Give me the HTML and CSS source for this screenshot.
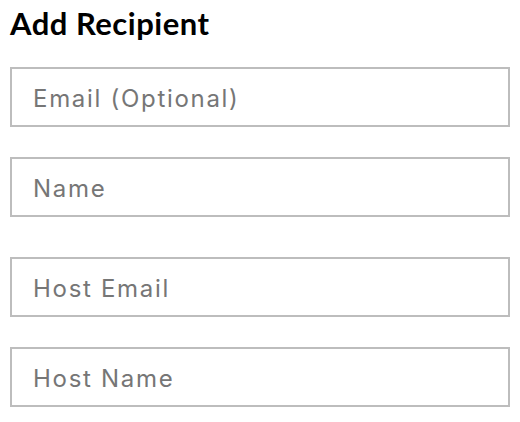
FILE: index.html
```html
<!DOCTYPE html>
<html lang="en">
<head>
  <meta charset="UTF-8">
  <meta name="viewport" content="width=device-width, initial-scale=1.0">
  <title>Add Recipient</title>
  <link rel="stylesheet" href="styles.css">
</head>
<body>
  <h1>Add Recipient</h1>

  <div class="field-group">
    <input class="field" type="email" placeholder="Email (Optional)">
    <input class="field" type="text" placeholder="Name">
  </div>

  <div class="field-group">
    <input class="field" type="email" placeholder="Host Email">
    <input class="field" type="text" placeholder="Host Name">
  </div>
</body>
</html>
```

FILE: styles.css
```css
body {
  font-family: 'Lato', sans-serif;
  margin: 0;
  padding: 0 10px;
  background-color: #fff;
}
h1 {
  font-size: 31px;
  font-weight: 700;
  letter-spacing: 0.5px;
  color: #000;
  margin: 5px 0 25px;
  line-height: 1.2;
}
.field-group {
  display: flex;
  flex-direction: column;
  gap: 30px;
  margin-bottom: 40px;
}
.field-group:last-child {
  margin-bottom: 0;
}
.field {
  box-sizing: border-box;
  width: 500px;
  height: 60px;
  padding: 2px 21px 0;
  border: 2px solid #bdbdbd;
  border-radius: 0;
  font-family: 'Inter', sans-serif;
  font-size: 24px;
  letter-spacing: 1.7px;
  color: #333;
  outline: none;
}
.field::placeholder {
  color: #767676;
}
```
